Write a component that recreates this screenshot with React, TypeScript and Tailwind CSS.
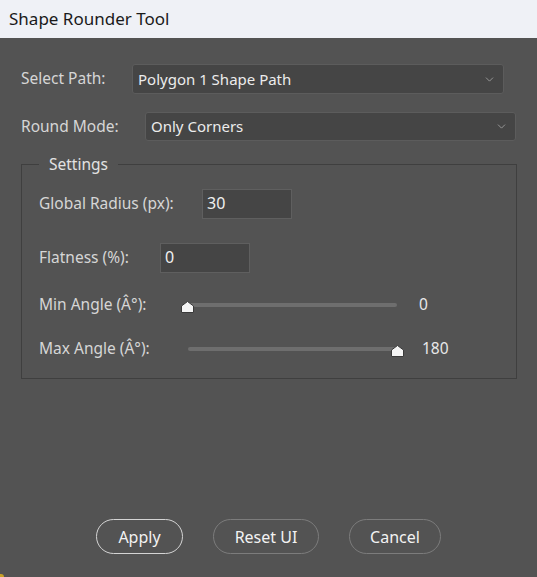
import { ChevronDown } from 'lucide-react'

const font = { fontFamily: '"Noto Sans", "Open Sans", sans-serif' }

function Dropdown({ value, width }: { value: string; width: string }) {
  return (
    <div
      className={`${width} h-full flex items-center justify-between pl-[5px] pr-[7px] bg-[#454545] border border-[#5c5c5c] rounded-[3px] text-[15px] text-[#ececec]`}
    >
      <span>{value}</span>
      <ChevronDown size={13} strokeWidth={1.5} className="text-[#a8a8a8]" />
    </div>
  )
}

function Thumb() {
  return (
    <svg width="13" height="12" viewBox="0 0 13 12">
      <path d="M6.5 0.5 L12.5 5 V11.5 H0.5 V5 Z" fill="#f4f4f4" stroke="#3a3a3a" strokeWidth="1" />
    </svg>
  )
}

function Slider({ atEnd }: { atEnd: boolean }) {
  return (
    <div className="relative w-[222px] h-[16px]">
      <div className="absolute left-[6px] right-[6px] top-[6px] h-[4px] rounded-full bg-[#6e6e6e]" />
      <div className={`absolute top-[4px] ${atEnd ? 'right-0' : 'left-0'}`}>
        <Thumb />
      </div>
    </div>
  )
}

export default function App() {
  return (
    <div className="relative w-[537px] h-[577px] flex flex-col overflow-hidden" style={font}>
      {/* title bar */}
      <div className="h-[38px] shrink-0 bg-[#eff1f6] pl-[9px] flex items-center text-[17px] text-[#1a1a1a]">
        Shape Rounder Tool
      </div>

      <div className="flex-1 bg-[#535353] px-[21px] pt-[26px] flex flex-col text-[#d6d6d6] text-[15.5px] whitespace-nowrap">
        <div className="flex items-center h-[30px]">
          <span className="w-[111px] shrink-0">Select Path:</span>
          <div className="h-full">
            <Dropdown value="Polygon 1 Shape Path" width="w-[372px]" />
          </div>
        </div>

        <div className="flex items-center h-[29px] mt-[18px]">
          <span className="w-[124px] shrink-0">Round Mode:</span>
          <div className="h-full">
            <Dropdown value="Only Corners" width="w-[371px]" />
          </div>
        </div>

        <fieldset className="mt-[13px] w-[496px] border border-[#3f3f3f]">
          <legend className="ml-[17px] px-[10px] leading-[20px] text-[#e2e2e2]">Settings</legend>
          <div className="pl-[17px] pt-[15px] pb-[21px]">
            <div className="flex items-center h-[30px]">
              <span className="w-[163px] shrink-0">Global Radius (px):</span>
              <div className="w-[90px] h-full bg-[#454545] border border-[#5f5f5f] pl-[4px] text-[16px] text-[#f0f0f0] leading-[26px]">
                30
              </div>
            </div>

            <div className="flex items-center h-[30px] mt-[24px]">
              <span className="w-[121px] shrink-0">Flatness (%):</span>
              <div className="w-[90px] h-full bg-[#454545] border border-[#5f5f5f] pl-[4px] text-[16px] text-[#f0f0f0] leading-[26px]">
                0
              </div>
            </div>

            <div className="flex items-center h-[16px] mt-[24px]">
              <span className="w-[142px] shrink-0">Min Angle (Â°):</span>
              <Slider atEnd={false} />
              <span className="ml-[16px] text-[#e8e8e8]">0</span>
            </div>

            <div className="flex items-center h-[16px] mt-[28px]">
              <span className="w-[143px] shrink-0">Max Angle (Â°):</span>
              <Slider atEnd />
              <span className="ml-[18px] text-[#e8e8e8]">180</span>
            </div>
          </div>
        </fieldset>

        <div className="mt-auto mb-[23px] flex justify-center gap-[30px] text-[16px] text-[#f2f2f2]">
          <button className="w-[87px] h-[35px] rounded-full border-[1.5px] border-[#d4d4d4]">Apply</button>
          <button className="w-[106px] h-[35px] rounded-full border border-[#7c7c7c]">Reset UI</button>
          <button className="w-[92px] h-[35px] rounded-full border border-[#7c7c7c]">Cancel</button>
        </div>
      </div>

      <span className="absolute left-0 bottom-0 w-[4px] h-[3px] rounded-tr-[3px] bg-[#c9a227]" />
    </div>
  )
}
